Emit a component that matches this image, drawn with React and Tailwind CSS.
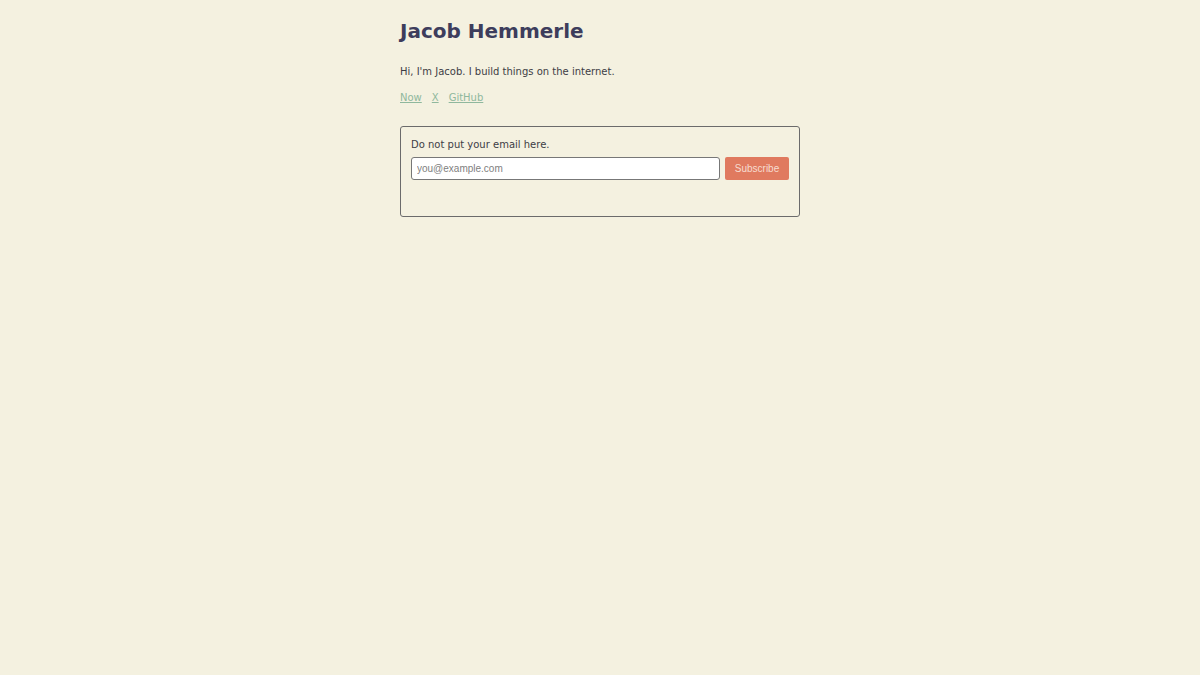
export default function App() {
  return (
    <div className="min-h-screen bg-[#f4f1e0] font-['DejaVu_Sans',sans-serif] text-[#3d3d45]">
      <div className="mx-auto w-[400px] pt-[17px]">
        <h1 className="text-[20px] font-bold leading-[28px] text-[#3d3d5c]">Jacob Hemmerle</h1>
        <p className="mt-[19px] text-[10px] leading-[16px]">Hi, I'm Jacob. I build things on the internet.</p>
        <nav className="mt-[10px] flex gap-[10px] text-[10px] leading-[16px] text-[#8fb89d]">
          <a href="#" className="underline">Now</a>
          <a href="#" className="underline">X</a>
          <a href="#" className="underline">GitHub</a>
        </nav>
        <div className="mt-[20px] h-[91px] rounded-[3px] border border-[#6b6b6b] px-[10px] pt-[11px]">
          <p className="text-[10px] leading-[14px]">Do not put your email here.</p>
          <form className="mt-[5px] flex gap-[5px]">
            <input
              type="email"
              placeholder="you@example.com"
              className="h-[23px] flex-1 rounded-[3px] border border-[#777] bg-white px-[5px] font-['Liberation_Sans',Arial,sans-serif] text-[10px] text-[#333] placeholder:text-[#808080] outline-none"
            />
            <button
              type="button"
              className="h-[23px] w-[64px] rounded-[2px] bg-[#e07a5f] font-['Liberation_Sans',Arial,sans-serif] text-[10px] text-[#f7dccf]"
            >
              Subscribe
            </button>
          </form>
        </div>
      </div>
    </div>
  );
}
